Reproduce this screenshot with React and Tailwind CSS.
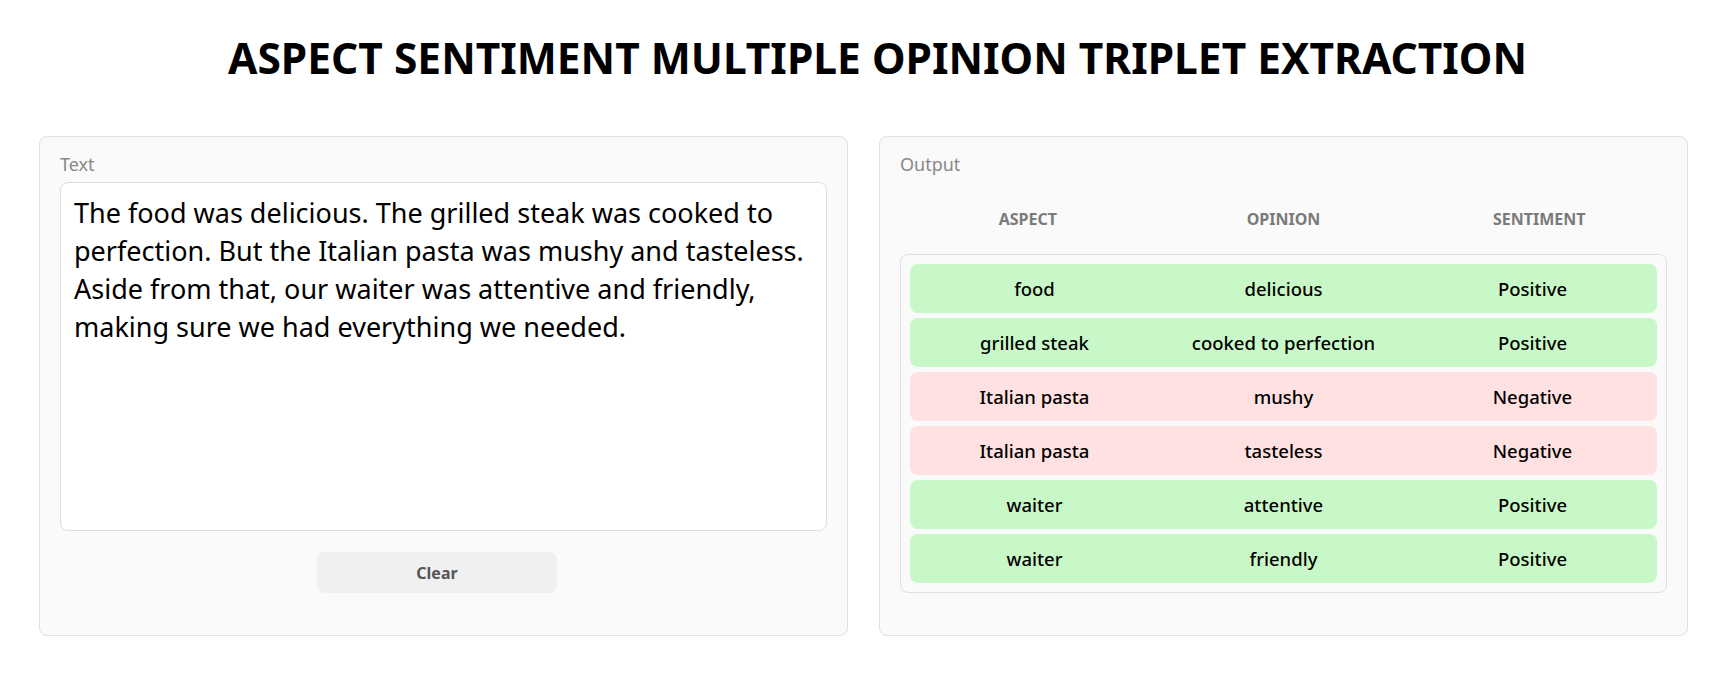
import React from "react";

const triplets = [
  { aspect: "food", opinion: "delicious", sentiment: "Positive" },
  { aspect: "grilled steak", opinion: "cooked to perfection", sentiment: "Positive" },
  { aspect: "Italian pasta", opinion: "mushy", sentiment: "Negative" },
  { aspect: "Italian pasta", opinion: "tasteless", sentiment: "Negative" },
  { aspect: "waiter", opinion: "attentive", sentiment: "Positive" },
  { aspect: "waiter", opinion: "friendly", sentiment: "Positive" },
];

const sample =
  "The food was delicious. The grilled steak was cooked to perfection. But the Italian pasta was mushy and tasteless. Aside from that, our waiter was attentive and friendly, making sure we had everything we needed.";

export default function App() {
  const [text, setText] = React.useState(sample);

  return (
    <div className="min-h-screen bg-white pl-[39px] pr-[41px] pb-[49px] font-['Noto_Sans',sans-serif] text-black">
      {/* Title */}
      <h1 className="pt-[33px] pl-[28px] h-[83px] text-center text-[42.5px] leading-[50px] font-bold">
        ASPECT SENTIMENT MULTIPLE OPINION TRIPLET EXTRACTION
      </h1>

      <div className="mt-[53px] grid grid-cols-2 gap-[31px]">
        {/* Input panel */}
        <div className="h-[500px] rounded-lg border border-[#e0e0e0] bg-[#fafafa] px-[20px] pt-[15px]">
          <div className="text-[18px] leading-[24px] text-[#888888]">Text</div>
          <textarea
            value={text}
            onChange={(e) => setText(e.target.value)}
            className="mt-[6px] block h-[349px] w-full resize-none rounded-lg border border-[#dddddd] bg-white px-[13px] py-[11px] text-[27px] leading-[38px] text-black outline-none"
          />
          <button
            onClick={() => setText("")}
            className="ml-[257px] mt-[21px] block h-[41px] w-[240px] rounded-lg bg-[#f0f0f0] text-[16px] font-bold text-[#555555]"
          >
            Clear
          </button>
        </div>

        {/* Output panel */}
        <div className="h-[500px] rounded-lg border border-[#e0e0e0] bg-[#fafafa] px-[20px] pt-[15px]">
          <div className="text-[18px] leading-[24px] text-[#888888]">Output</div>
          <div className="mt-[31px] grid grid-cols-3 text-center text-[16px] leading-[24px] font-bold text-[#7a7a7a]">
            <div>ASPECT</div>
            <div>OPINION</div>
            <div>SENTIMENT</div>
          </div>
          <div className="mt-[23px] flex flex-col gap-[5px] rounded-lg border border-[#e0e0e0] bg-[#fafafa] p-[9px]">
            {triplets.map((t, i) => (
              <div
                key={i}
                className={`grid h-[49px] grid-cols-3 items-center rounded-lg text-center text-[18.5px] font-medium ${
                  t.sentiment === "Positive" ? "bg-[#c9f8c8]" : "bg-[#ffe1e2]"
                }`}
              >
                <div>{t.aspect}</div>
                <div>{t.opinion}</div>
                <div>{t.sentiment}</div>
              </div>
            ))}
          </div>
        </div>
      </div>
    </div>
  );
}
